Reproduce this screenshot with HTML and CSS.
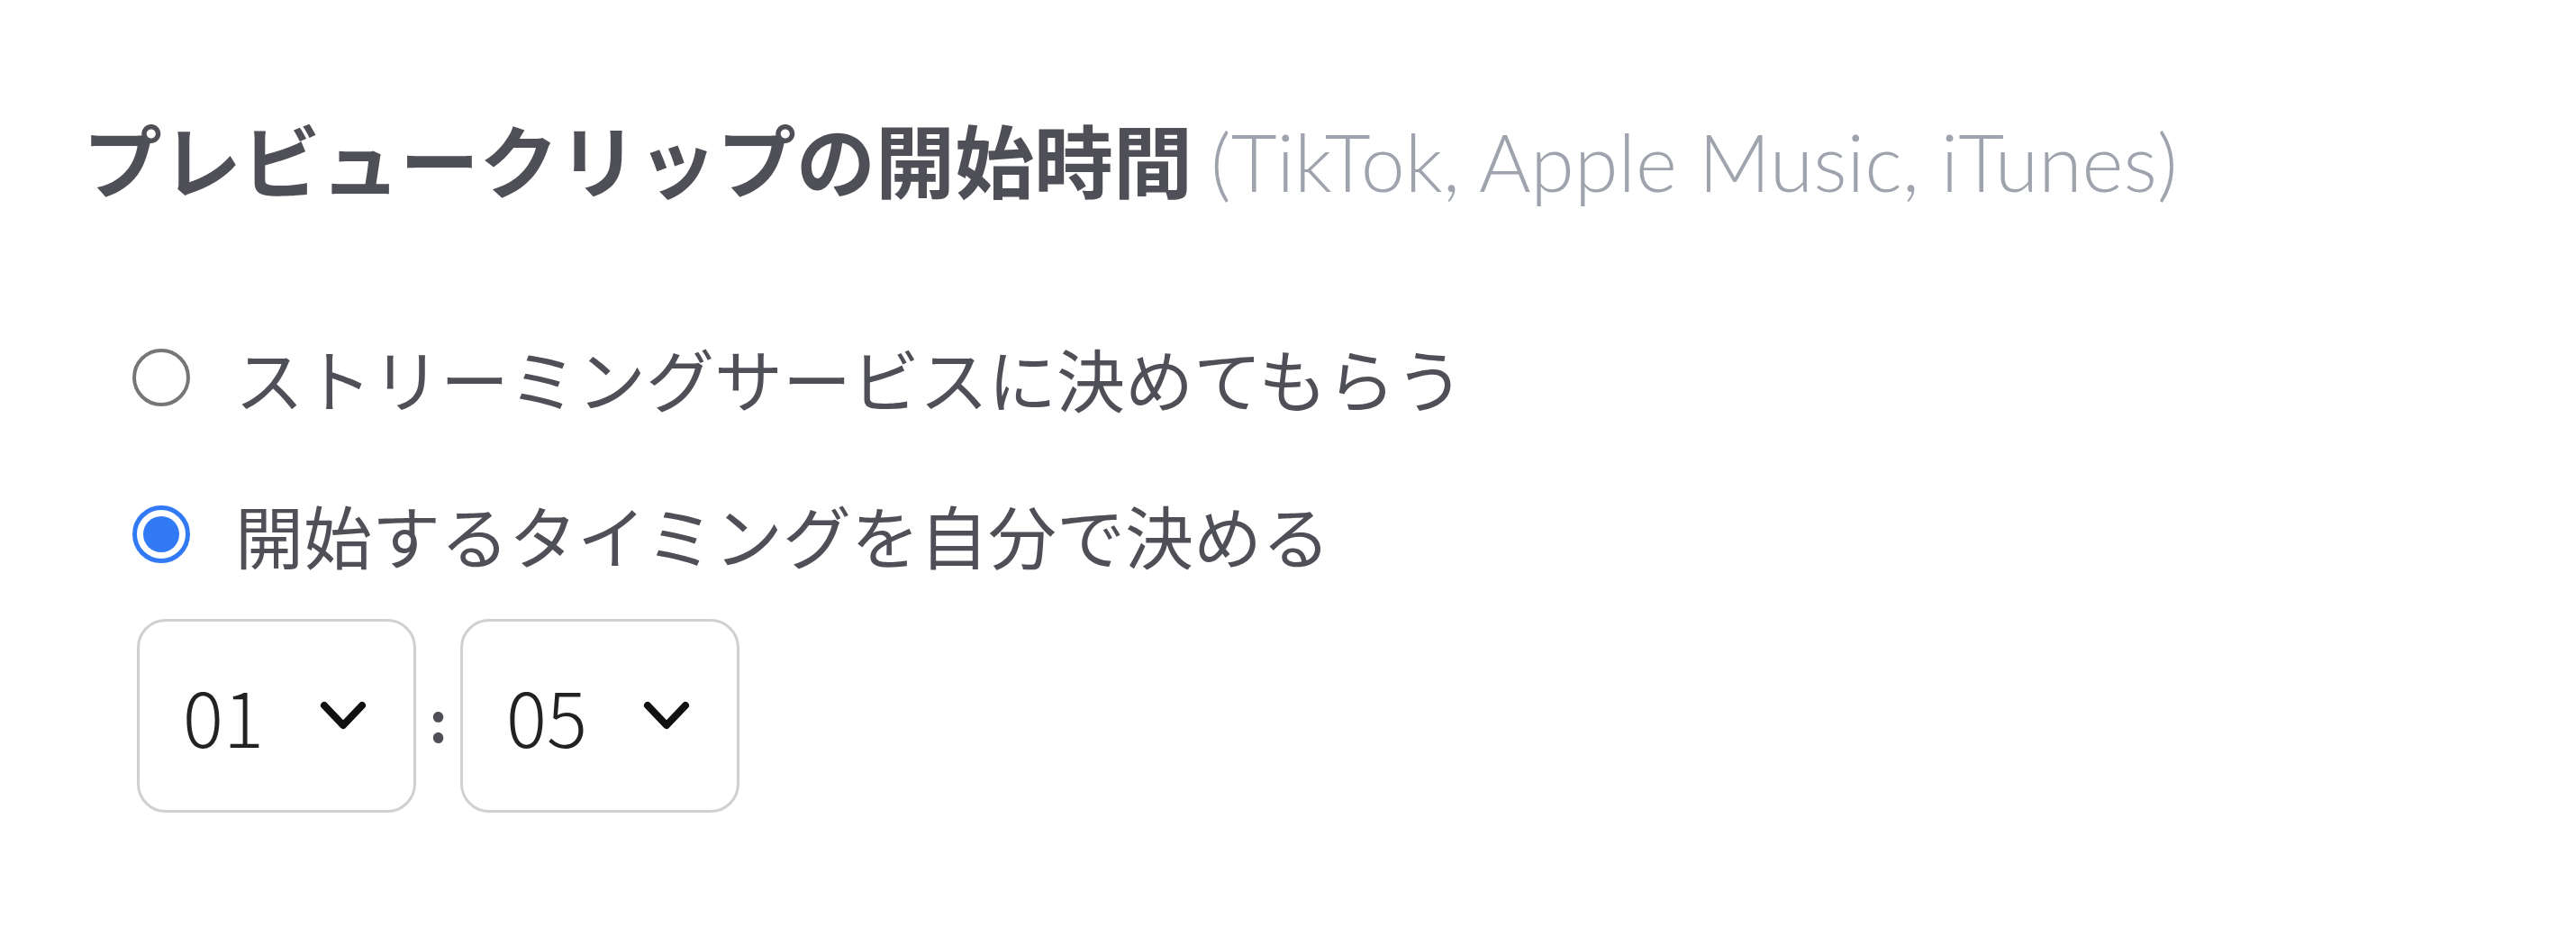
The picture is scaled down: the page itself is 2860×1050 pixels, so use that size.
FILE: index.html
```html
<!DOCTYPE html>
<html lang="ja">
<head>
  <meta charset="UTF-8" />
  <meta name="viewport" content="width=device-width, initial-scale=1.0" />
  <title>プレビュークリップの開始時間</title>
  <link rel="stylesheet" href="styles.css">
</head>
<body>
  <section class="setting">
    <h2 class="setting-title">プレビュークリップの開始時間 <span class="stores">(TikTok, Apple Music, iTunes)</span></h2>

    <div class="options">
      <label class="option">
        <span class="radio"></span>
        <span class="option-text">ストリーミングサービスに決めてもらう</span>
      </label>
      <label class="option">
        <span class="radio checked"></span>
        <span class="option-text">開始するタイミングを自分で決める</span>
      </label>
    </div>

    <div class="time-picker">
      <div class="select">
        <span class="select-value">01</span>
        <svg class="chevron" viewBox="0 0 52 32" width="52" height="32"><polyline points="5,5 26,27 47,5" /></svg>
      </div>
      <span class="colon">:</span>
      <div class="select">
        <span class="select-value">05</span>
        <svg class="chevron" viewBox="0 0 52 32" width="52" height="32"><polyline points="5,5 26,27 47,5" /></svg>
      </div>
    </div>
  </section>
</body>
</html>
```

FILE: styles.css
```css
* {
  box-sizing: border-box;
}
body {
  margin: 0;
  background: #fff;
  color: #4f4f57;
  font-family: "Noto Sans CJK JP", "Noto Sans", sans-serif;
}
.setting {
  padding: 122px 0 0 92px;
}
.setting-title {
  margin: 0;
  font-size: 88px;
  font-weight: 700;
  line-height: 1.2;
  white-space: nowrap;
}
.stores {
  font-family: Lato, "Noto Sans", sans-serif;
  font-weight: 300;
  color: #9ea3ad;
}
.options {
  display: flex;
  flex-direction: column;
  gap: 83px;
  margin: 141px 0 0 55px;
}
.option {
  display: flex;
  align-items: center;
  gap: 50px;
  font-size: 76px;
  line-height: 1.2;
}
.radio {
  width: 64px;
  height: 64px;
  border: 4px solid #767676;
  border-radius: 50%;
  display: flex;
  align-items: center;
  justify-content: center;
  flex-shrink: 0;
}
.radio.checked {
  border: 5px solid #3179f5;
}
.radio.checked::after {
  content: "";
  width: 40px;
  height: 40px;
  border-radius: 50%;
  background: #3179f5;
}
.time-picker {
  display: flex;
  align-items: center;
  margin: 48px 0 0 60px;
}
.select {
  width: 310px;
  height: 215px;
  border: 3px solid #d0d0d0;
  border-radius: 32px;
  display: flex;
  align-items: center;
  justify-content: space-between;
  padding: 0 52px 0 48px;
  color: #222;
}
.select-value {
  font-size: 84px;
  font-weight: 300;
  line-height: 1;
}
.chevron {
  fill: none;
  stroke: #111;
  stroke-width: 8;
  stroke-linecap: round;
  stroke-linejoin: round;
}
.colon {
  width: 49px;
  text-align: center;
  font-size: 62px;
  font-weight: 700;
  line-height: 1;
  padding-top: 6px;
}
```
